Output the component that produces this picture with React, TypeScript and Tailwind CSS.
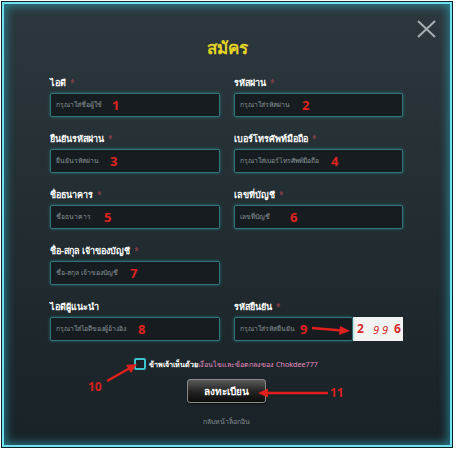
import React from "react";

type F = { label: string; req?: boolean; ph: string; num: string; nx: number };

function Field({ f, captcha }: { f: F; captcha?: boolean }) {
  return (
    <div className="flex flex-col">
      <div className="h-[12px] leading-[12px] text-[9px] font-bold text-white flex items-center whitespace-nowrap">
        <span>{f.label}</span>
        {f.req && <span className="ml-[4px] text-[8px] text-[#a8434c] font-normal">*</span>}
      </div>
      <div className="mt-[4px] h-[24px] flex">
        <div className="relative flex-1 h-full bg-[#161c1f] border border-[#2e7678] rounded-[2px] shadow-[0_0_3px_rgba(50,160,165,0.6)] flex items-center pl-[5px]">
          <span className="text-[6.8px] text-[#8b9498] whitespace-nowrap">{f.ph}</span>
          <span
            className="absolute top-1/2 -translate-y-1/2 text-[13px] leading-[14px] font-bold text-[#e0231f]"
            style={{ left: f.nx }}
          >
            {f.num}
          </span>
        </div>
        {captcha && (
          <div className="w-[50px] h-full bg-[#f3f3f3] flex items-center pl-[4px] text-[#d42a2a] font-bold">
            <span className="text-[12px]">2</span>
            <span className="ml-[9px] mt-[3px] text-[11px] italic font-normal">9</span>
            <span className="ml-[3px] mt-[3px] text-[11px] italic font-normal">9</span>
            <span className="ml-[6px] text-[12px]">6</span>
          </div>
        )}
      </div>
    </div>
  );
}

export default function App() {
  const rows: (F | null)[][] = [
    [
      { label: "ไอดี", req: true, ph: "กรุณาใส่ชื่อผู้ใช้", num: "1", nx: 61 },
      { label: "รหัสผ่าน", req: true, ph: "กรุณาใส่รหัสผ่าน", num: "2", nx: 67 },
    ],
    [
      { label: "ยืนยันรหัสผ่าน", req: true, ph: "ยืนยันรหัสผ่าน", num: "3", nx: 59 },
      { label: "เบอร์โทรศัพท์มือถือ", req: true, ph: "กรุณาใส่เบอร์โทรศัพท์มือถือ", num: "4", nx: 96 },
    ],
    [
      { label: "ชื่อธนาคาร", req: true, ph: "ชื่อธนาคาร", num: "5", nx: 53 },
      { label: "เลขที่บัญชี", req: true, ph: "เลขที่บัญชี", num: "6", nx: 55 },
    ],
    [{ label: "ชื่อ-สกุล เจ้าของบัญชี", req: true, ph: "ชื่อ-สกุล เจ้าของบัญชี", num: "7", nx: 79 }, null],
  ];
  return (
    <div className="w-[456px] h-[450px] bg-white p-[2px] font-['Noto_Sans','DejaVu_Sans',sans-serif]">
      <div className="relative w-[450px] h-[445px] border-2 border-[#6fe0ee] shadow-[0_0_0_1px_#0e2328,inset_0_0_10px_2px_rgba(50,185,210,0.55)] bg-linear-to-b from-[#2c383e] to-[#192226] flex flex-col items-stretch pt-[32px]">
        <div className="h-[24px] leading-[24px] text-center text-[17px] font-bold text-[#e6d424]">สมัคร</div>

        <div className="mt-[17px] pl-[46px] grid grid-cols-[170px_169px] gap-x-[14px] gap-y-[16px]">
          {rows.flat().map((f, i) => (f ? <Field key={i} f={f} /> : <div key={i} />))}
          <Field f={{ label: "ไอดีผู้แนะนำ", ph: "กรุณาใส่ไอดีของผู้อ้างอิง", num: "8", nx: 87 }} />
          <Field f={{ label: "รหัสยืนยัน", req: true, ph: "กรุณาใส่รหัสยืนยัน", num: "9", nx: 65 }} captcha />
        </div>

        <div className="mt-[17px] flex justify-center items-center h-[12px] pr-[2px]">
          <div className="w-[12px] h-[12px] rounded-[2px] border-2 border-[#3cc2cc] bg-[#1a2327]" />
          <span className="ml-[3px] text-[7.2px] font-bold text-white whitespace-nowrap">ข้าพเจ้าเห็นด้วย</span>
          <span className="text-[7.2px] text-[#e48ec0] whitespace-nowrap">เงื่อนไขและข้อตกลงของ Chokdee777</span>
        </div>

        <div className="mt-[9px] flex justify-center pr-[2px]">
          <div className="w-[79px] h-[24px] rounded-[3px] border border-[#8c8c8c] bg-linear-to-b from-[#5c5c5c] via-[#262626] to-[#0c0c0c] flex items-center justify-center text-white font-bold text-[10px] shadow-[0_1px_2px_rgba(0,0,0,0.6)]">
            ลงทะเบียน
          </div>
        </div>

        <div className="mt-[14px] text-center text-[7px] leading-[10px] text-[#858d91] pr-[2px]">กลับหน้าล็อกอิน</div>

        {/* close button */}
        <svg className="absolute left-[413px] top-[16px]" width="19" height="18" viewBox="0 0 19 18">
          <path d="M1 1 L18 17 M18 1 L1 17" stroke="#a7afb2" strokeWidth="2" />
        </svg>

        {/* annotations */}
        <svg className="absolute left-0 top-0 pointer-events-none" width="446" height="441" viewBox="0 0 446 441">
          <g fill="#e0201c" stroke="#e0201c">
            <line x1="308" y1="324" x2="338" y2="326.5" strokeWidth="2.5" />
            <polygon points="346,327 336,322 335,331" stroke="none" />
            <line x1="103" y1="377" x2="126" y2="364" strokeWidth="2.5" />
            <polygon points="133,360 122,361 127,369" stroke="none" />
            <line x1="324" y1="389" x2="264" y2="389" strokeWidth="2.5" />
            <polygon points="254,389 264,384.5 264,393.5" stroke="none" />
          </g>
        </svg>
        <span className="absolute left-[84px] top-[376px] text-[12px] leading-[14px] font-bold text-[#d8211d]">10</span>
        <span className="absolute left-[326px] top-[382px] text-[12px] leading-[14px] font-bold text-[#d8211d]">11</span>
      </div>
    </div>
  );
}
